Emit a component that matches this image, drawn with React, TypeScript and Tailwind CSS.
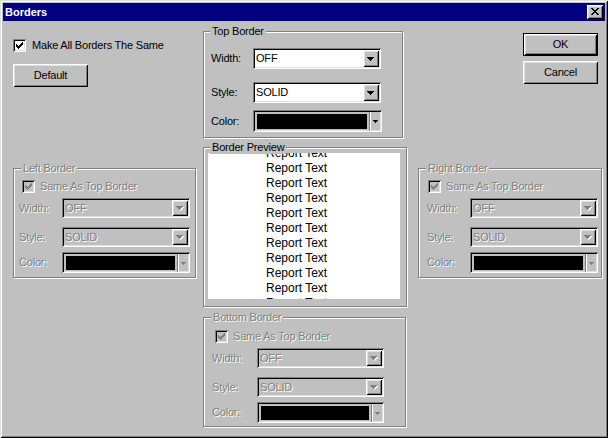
import clsx from "clsx";

const raised =
  "shadow-[inset_1px_1px_0_#fff,inset_-1px_-1px_0_#000,inset_2px_2px_0_#dfdfdf,inset_-2px_-2px_0_#808080]";
const sunken =
  "shadow-[inset_1px_1px_0_#808080,inset_-1px_-1px_0_#fff,inset_2px_2px_0_#000,inset_-2px_-2px_0_#dfdfdf]";
const etched = "border border-[#808080] shadow-[1px_1px_0_#fff,inset_1px_1px_0_#fff]";
const dim = "text-[#808080] [text-shadow:1px_1px_0_#fff]";

function Arrow({ disabled }: { disabled?: boolean }) {
  const d = "M0 0h7v1H0zM1 1h5v1H1zM2 2h3v1H2zM3 3h1v1H3z";
  return (
    <svg width="8" height="5" viewBox="0 0 8 5" shapeRendering="crispEdges">
      {disabled && <path d={d} fill="#fff" transform="translate(1 1)" />}
      <path d={d} fill={disabled ? "#808080" : "#000"} />
    </svg>
  );
}

function SmallArrow({ disabled }: { disabled?: boolean }) {
  return (
    <svg width="5" height="3" viewBox="0 0 5 3" shapeRendering="crispEdges">
      <path d="M0 0h5v1H0zM1 1h3v1H1zM2 2h1v1H2z" fill={disabled ? "#808080" : "#000"} />
    </svg>
  );
}

function CheckBox({ disabled }: { disabled?: boolean }) {
  return (
    <span
      className={clsx(
        "flex h-[13px] w-[13px] shrink-0 items-center justify-center",
        sunken,
        disabled ? "bg-[#c0c0c0]" : "bg-white"
      )}
    >
      <svg width="7" height="7" viewBox="0 0 7 7" shapeRendering="crispEdges">
        <path
          d="M0 2h1v3H0zM1 3h1v3H1zM2 4h1v3H2zM3 3h1v3H3zM4 2h1v3H4zM5 1h1v3H5zM6 0h1v3H6z"
          fill={disabled ? "#808080" : "#000"}
        />
      </svg>
    </span>
  );
}

function Combo({ value, disabled, className }: { value: string; disabled?: boolean; className: string }) {
  return (
    <div className={clsx("flex p-[2px]", sunken, disabled ? "bg-[#c0c0c0]" : "bg-white", className)}>
      <span className={clsx("flex flex-1 items-center pl-[1px]", disabled ? dim : "text-black")}>{value}</span>
      <div className={clsx("flex w-[16px] items-center justify-center bg-[#c0c0c0] pt-px", raised)}>
        <Arrow disabled={disabled} />
      </div>
    </div>
  );
}

function ColorCombo({ disabled, className }: { disabled?: boolean; className: string }) {
  return (
    <div className={clsx("flex bg-[#c0c0c0] pb-[3px] pl-[4px] pr-[2px] pt-[4px]", sunken, className)}>
      <div className="flex-1 bg-black" />
      <div className="-my-[2px] ml-[2px] w-px bg-[#808080]" />
      <div className="-my-[2px] w-px bg-white" />
      <div className="flex w-[9px] items-center justify-center">
        <SmallArrow disabled={disabled} />
      </div>
    </div>
  );
}

function GroupLabel({
  children,
  disabled,
  className,
}: {
  children: string;
  disabled?: boolean;
  className: string;
}) {
  return (
    <span className={clsx("absolute -top-[7px] bg-[#c0c0c0] px-[2px] leading-[13px]", disabled && dim, className)}>
      {children}
    </span>
  );
}

function Button({ label, isDefault, className }: { label: string; isDefault?: boolean; className: string }) {
  return (
    <button
      className={clsx(
        "flex h-[23px] w-[75px] items-center justify-center bg-[#c0c0c0] text-black",
        isDefault ? "border border-black" : "",
        raised,
        className
      )}
    >
      {label}
    </button>
  );
}

function SideGroup({
  title,
  className,
  labelLeft,
  padClass,
  cbClass,
  labelW,
  comboW,
}: {
  title: string;
  className: string;
  labelLeft: string;
  padClass: string;
  cbClass: string;
  labelW: string;
  comboW: string;
}) {
  return (
    <div className={clsx("relative flex flex-col", etched, padClass, className)}>
      <GroupLabel disabled className={labelLeft}>
        {title}
      </GroupLabel>
      <div className={clsx("flex h-[13px] items-center gap-[5px]", cbClass)}>
        <CheckBox disabled />
        <span className={dim}>Same As Top Border</span>
      </div>
      <div className="mt-[5px] flex h-[20px] items-center">
        <span className={clsx(labelW, dim)}>Width:</span>
        <Combo value="OFF" disabled className={clsx("h-[20px]", comboW)} />
      </div>
      <div className="mt-[9px] flex h-[20px] items-center">
        <span className={clsx(labelW, dim)}>Style:</span>
        <Combo value="SOLID" disabled className={clsx("h-[20px]", comboW)} />
      </div>
      <div className="mt-[5px] flex h-[21px] items-center">
        <span className={clsx(labelW, dim)}>Color:</span>
        <ColorCombo disabled className={clsx("h-[21px]", comboW)} />
      </div>
    </div>
  );
}

export default function App() {
  const lines = Array.from({ length: 11 }, (_, i) => i);

  return (
    <div
      className={clsx(
        "h-[438px] w-[608px] bg-[#c0c0c0] p-[3px] text-[11px] leading-[13px] tracking-[-0.2px] text-black [font-family:'Liberation_Sans',Arial,sans-serif]",
        "shadow-[inset_1px_1px_0_#dfdfdf,inset_-1px_-1px_0_#000,inset_2px_2px_0_#fff,inset_-2px_-2px_0_#808080]"
      )}
    >
      {/* title bar */}
      <div className="flex h-[18px] items-center justify-between bg-[#000080] pl-[2px] pr-[2px]">
        <span className="font-bold tracking-normal text-white">Borders</span>
        <div className={clsx("flex h-[14px] w-[16px] items-center justify-center bg-[#c0c0c0] pb-px pr-px", raised)}>
          <svg width="8" height="7" viewBox="0 0 8 7" shapeRendering="crispEdges">
            <path
              d="M0 0h2v1H0zM6 0h2v1H6zM1 1h2v1H1zM5 1h2v1H5zM2 2h4v1H2zM3 3h2v1H3zM2 4h4v1H2zM1 5h2v1H1zM5 5h2v1H5zM0 6h2v1H0zM6 6h2v1H6z"
              fill="#000"
            />
          </svg>
        </div>
      </div>

      <div className="flex items-start pl-[10px] pt-[10px]">
        {/* left column */}
        <div className="flex w-[190px] flex-col">
          <div className="mt-[8px] flex h-[13px] items-center gap-[6px]">
            <CheckBox />
            <span>Make All Borders The Same</span>
          </div>
          <Button label="Default" className="mt-[12px]" />
          <SideGroup
            title="Left Border"
            className="mt-[81px] h-[110px] w-[183px]"
            labelLeft="left-[7px]"
            padClass="pl-[5px] pt-[11px]"
            cbClass="ml-[3px]"
            labelW="w-[43px]"
            comboW="w-[128px]"
          />
        </div>

        {/* middle column */}
        <div className="flex w-[204px] flex-col">
          <div className={clsx("relative flex h-[107px] w-[200px] flex-col pl-[7px] pt-[16px]", etched)}>
            <GroupLabel className="left-[6px]">Top Border</GroupLabel>
            <div className="flex h-[21px] items-center">
              <span className="w-[42px]">Width:</span>
              <Combo value="OFF" className="h-[21px] w-[128px]" />
            </div>
            <div className="mt-[13px] flex h-[21px] items-center">
              <span className="w-[42px]">Style:</span>
              <Combo value="SOLID" className="h-[21px] w-[128px]" />
            </div>
            <div className="mt-[7px] flex h-[22px] items-center">
              <span className="w-[42px]">Color:</span>
              <ColorCombo className="h-[22px] w-[129px]" />
            </div>
          </div>

          <div className={clsx("relative mt-[9px] h-[160px] w-[204px]", etched)}>
            <div className="ml-[4px] mt-[5px] h-[146px] w-[192px] overflow-hidden bg-white">
              <div className="-mt-[7px] pl-[58px] text-[12px] leading-[15px] tracking-normal">
                {lines.map((i) => (
                  <div key={i}>Report Text</div>
                ))}
              </div>
            </div>
            <GroupLabel className="left-[6px]">Border Preview</GroupLabel>
          </div>

          <SideGroup
            title="Bottom Border"
            className="mt-[10px] h-[110px] w-[203px]"
            labelLeft="left-[7px]"
            padClass="pl-[8px] pt-[12px]"
            cbClass="ml-[3px]"
            labelW="w-[45px]"
            comboW="w-[127px]"
          />
        </div>

        {/* right column */}
        <div className="ml-[11px] flex w-[184px] flex-col">
          <Button label="OK" isDefault className="ml-[105px] mt-[2px]" />
          <Button label="Cancel" className="ml-[105px] mt-[5px]" />
          <SideGroup
            title="Right Border"
            className="mt-[84px] h-[110px] w-[184px]"
            labelLeft="left-[7px]"
            padClass="pl-[8px] pt-[11px]"
            cbClass="ml-[1px]"
            labelW="w-[43px]"
            comboW="w-[128px]"
          />
        </div>
      </div>
    </div>
  );
}
